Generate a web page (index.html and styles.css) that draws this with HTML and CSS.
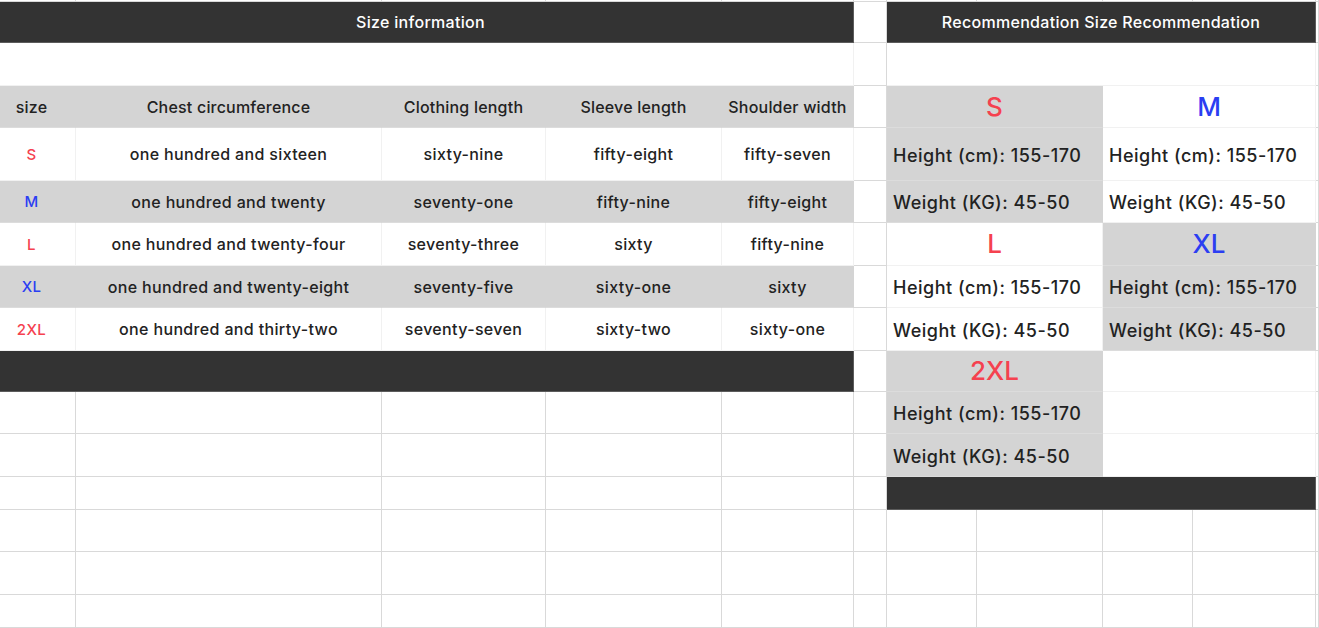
FILE: index.html
```html
<!DOCTYPE html>
<html lang="en">
<head>
<meta charset="utf-8">
<title>Size information</title>
<link rel="stylesheet" href="styles.css">
</head>
<body>
<table class="sheet">
  <colgroup>
    <col class="w76"><col class="w306"><col class="w164"><col class="w176"><col class="w132">
    <col class="w33"><col class="w90"><col class="w126"><col class="w90"><col class="w123"><col class="w3">
  </colgroup>
  <tbody>
    <tr class="h2"><td></td><td></td><td></td><td></td><td></td><td></td><td></td><td></td><td></td><td></td><td></td></tr>
    <tr class="h41">
      <td colspan="5" class="dark title shift">Size information</td>
      <td></td>
      <td colspan="4" class="dark title">Recommendation Size Recommendation</td>
      <td></td>
    </tr>
    <tr class="h43">
      <td colspan="5" class="white"></td>
      <td></td>
      <td colspan="4" class="white"></td>
      <td></td>
    </tr>
    <tr class="h42">
      <td class="grey head shift">size</td>
      <td class="grey head">Chest circumference</td>
      <td class="grey head">Clothing length</td>
      <td class="grey head">Sleeve length</td>
      <td class="grey head">Shoulder width</td>
      <td></td>
      <td colspan="2" class="grey big red">S</td>
      <td colspan="2" class="white big blue">M</td>
      <td></td>
    </tr>
    <tr class="h53">
      <td class="white data size red shift">S</td>
      <td class="white data">one hundred and sixteen</td>
      <td class="white data">sixty-nine</td>
      <td class="white data">fifty-eight</td>
      <td class="white data">fifty-seven</td>
      <td></td>
      <td colspan="2" class="grey rec">Height (cm): 155-170</td>
      <td colspan="2" class="white rec">Height (cm): 155-170</td>
      <td></td>
    </tr>
    <tr class="h42">
      <td class="grey data size blue shift">M</td>
      <td class="grey data">one hundred and twenty</td>
      <td class="grey data">seventy-one</td>
      <td class="grey data">fifty-nine</td>
      <td class="grey data">fifty-eight</td>
      <td></td>
      <td colspan="2" class="grey rec">Weight (KG): 45-50</td>
      <td colspan="2" class="white rec">Weight (KG): 45-50</td>
      <td></td>
    </tr>
    <tr class="h43">
      <td class="white data size red shift">L</td>
      <td class="white data">one hundred and twenty-four</td>
      <td class="white data">seventy-three</td>
      <td class="white data">sixty</td>
      <td class="white data">fifty-nine</td>
      <td></td>
      <td colspan="2" class="white big red">L</td>
      <td colspan="2" class="grey big blue">XL</td>
      <td></td>
    </tr>
    <tr class="h42">
      <td class="grey data size blue shift">XL</td>
      <td class="grey data">one hundred and twenty-eight</td>
      <td class="grey data">seventy-five</td>
      <td class="grey data">sixty-one</td>
      <td class="grey data">sixty</td>
      <td></td>
      <td colspan="2" class="white rec">Height (cm): 155-170</td>
      <td colspan="2" class="grey rec">Height (cm): 155-170</td>
      <td></td>
    </tr>
    <tr class="h43">
      <td class="white data size red shift">2XL</td>
      <td class="white data">one hundred and thirty-two</td>
      <td class="white data">seventy-seven</td>
      <td class="white data">sixty-two</td>
      <td class="white data">sixty-one</td>
      <td></td>
      <td colspan="2" class="white rec">Weight (KG): 45-50</td>
      <td colspan="2" class="grey rec">Weight (KG): 45-50</td>
      <td></td>
    </tr>
    <tr class="h41">
      <td colspan="5" class="dark"></td>
      <td></td>
      <td colspan="2" class="grey big red">2XL</td>
      <td colspan="2" class="white"></td>
      <td></td>
    </tr>
    <tr class="h42">
      <td></td><td></td><td></td><td></td><td></td>
      <td></td>
      <td colspan="2" class="grey rec">Height (cm): 155-170</td>
      <td colspan="2" class="white"></td>
      <td></td>
    </tr>
    <tr class="h43">
      <td></td><td></td><td></td><td></td><td></td>
      <td></td>
      <td colspan="2" class="grey rec">Weight (KG): 45-50</td>
      <td colspan="2" class="white"></td>
      <td></td>
    </tr>
    <tr class="h33">
      <td></td><td></td><td></td><td></td><td></td>
      <td></td>
      <td colspan="4" class="dark"></td>
      <td></td>
    </tr>
    <tr class="h42"><td></td><td></td><td></td><td></td><td></td><td></td><td></td><td></td><td></td><td></td><td></td></tr>
    <tr class="h43"><td></td><td></td><td></td><td></td><td></td><td></td><td></td><td></td><td></td><td></td><td></td></tr>
    <tr class="h33"><td></td><td></td><td></td><td></td><td></td><td></td><td></td><td></td><td></td><td></td><td></td></tr>
  </tbody>
</table>
</body>
</html>
```
FILE: styles.css
```css
html, body {
  margin: 0;
  padding: 0;
  background: #ffffff;
  overflow: hidden;
}

body {
  font-family: Inter, "Noto Sans", "Liberation Sans", sans-serif;
  color: #222222;
}

.sheet {
  table-layout: fixed;
  border-collapse: separate;
  border-spacing: 0;
  width: 1319px;
}

.w76 { width: 76px; }
.w306 { width: 306px; }
.w164 { width: 164px; }
.w176 { width: 176px; }
.w132 { width: 132px; }
.w33 { width: 33px; }
.w90 { width: 90px; }
.w126 { width: 126px; }
.w123 { width: 123px; }
.w3 { width: 3px; }

.h2 { height: 2px; }
.h33 { height: 33px; }
.h41 { height: 41px; }
.h42 { height: 42px; }
.h43 { height: 43px; }
.h53 { height: 53px; }

.sheet td {
  padding: 0;
  border-right: 1px solid #d9d9d9;
  border-bottom: 1px solid #d9d9d9;
  vertical-align: middle;
  text-align: center;
  white-space: nowrap;
  overflow: hidden;
  line-height: 1;
}

.sheet td.dark {
  background: #333333;
  border-right-color: #5c5c5c;
  border-bottom-color: #5c5c5c;
}

.sheet td.grey {
  background: #d4d4d4;
  border-right-color: #d4d4d4;
  border-bottom-color: #dcdcdc;
}

.sheet td.white {
  background: #ffffff;
  border-right-color: #f1f1f1;
  border-bottom-color: #f1f1f1;
}

/* the sheet is scrolled a little: the first column starts left of the window */
.sheet td.shift {
  padding-right: 12px;
}

.title {
  color: #ffffff;
  font-size: 16px;
  font-weight: 500;
  letter-spacing: 0.3px;
}

.head {
  font-size: 16px;
  font-weight: 500;
  letter-spacing: 0.2px;
}

.data {
  font-size: 16px;
  font-weight: 450;
  letter-spacing: 0.35px;
}

.data.size {
  font-size: 15px;
}

.sheet td.rec {
  text-align: left;
  padding-left: 6px;
  padding-top: 3px;
  font-size: 18px;
  font-weight: 500;
  letter-spacing: 0.5px;
}

.big {
  font-size: 26px;
  font-weight: 500;
}

.red { color: #f5414f; }
.blue { color: #2b3ef2; }
```
